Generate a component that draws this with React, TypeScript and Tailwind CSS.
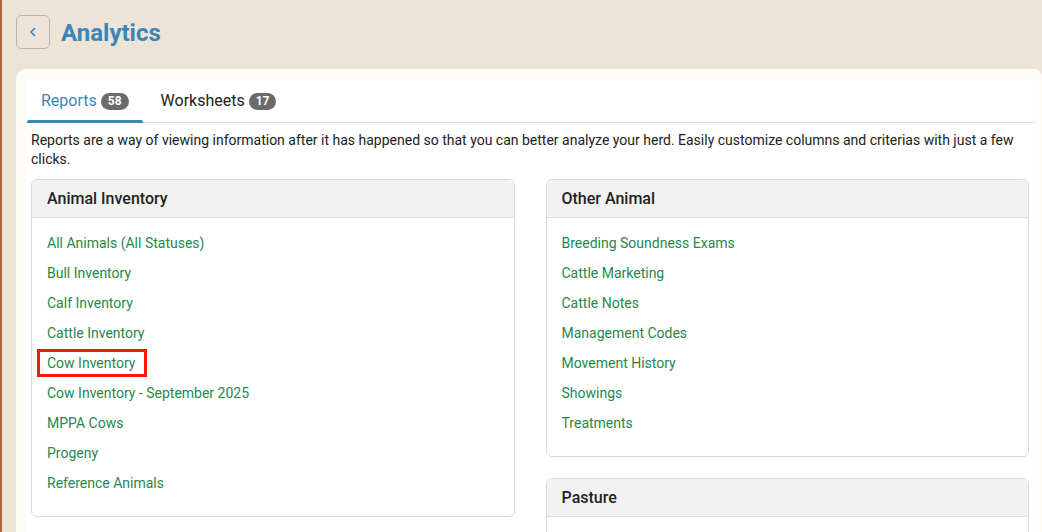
import React from "react";

const font = { fontFamily: "Roboto, 'Liberation Sans', sans-serif" };

function Panel({ title, items, highlight, className = "" }: { title: string; items: string[]; highlight?: string; className?: string }) {
  return (
    <div className={"rounded-[6px] border border-[#d9d9d9] bg-white overflow-visible " + className}>
      <div className="h-[38px] flex items-center px-[15px] bg-[#f2f2f2] border-b border-[#dcdcdc] rounded-t-[6px] text-[16px] font-medium text-[#222]">
        {title}
      </div>
      {items.length > 0 && (
        <ul className="pt-[10px] pb-[18px] px-[15px]">
          {items.map((it) => (
            <li key={it} className="h-[30px] flex items-center text-[14px] text-[#25884d]">
              {it === highlight ? (
                <span className="relative leading-[16px]">
                  {it}
                  <span className="absolute -left-[10px] -right-[12px] -top-[6px] -bottom-[6px] border-[3px] border-[#f31a00]" />
                </span>
              ) : (
                <span>{it}</span>
              )}
            </li>
          ))}
        </ul>
      )}
    </div>
  );
}

export default function App() {
  return (
    <div className="flex h-[532px] overflow-hidden bg-[#ede4d7]" style={font}>
      <div className="w-[2px] shrink-0 bg-[#a4673b]" />
      <div className="flex-1 flex flex-col overflow-hidden">
        <div className="flex items-center pl-[14px] pt-[15px] h-[49px] shrink-0">
          <button className="w-[34px] h-[34px] rounded-[5px] border border-[#b9b6b1] flex items-center justify-center">
            <svg width="12" height="12" viewBox="0 0 12 12" fill="none">
              <path d="M7.5 2.5 L4 6 L7.5 9.5" stroke="#3a86b9" strokeWidth="1.6" strokeLinecap="round" strokeLinejoin="round" />
            </svg>
          </button>
          <h1 className="ml-[11px] mt-[1px] text-[24px] font-bold text-[#3a86b9] leading-none">Analytics</h1>
        </div>
        <div className="mt-[20px] ml-[14px] rounded-tl-[10px] rounded-tr-[8px] bg-[#fffcf7] pl-[10px] pr-[7px] pt-[10px] flex-1">
          <div className="bg-white h-full pl-[1px] pr-0">
            <div className="flex border-b border-[#dcdcdc] h-[44px]">
              <div className="relative flex items-center px-[14px] pt-[1px] text-[16px] text-[#3a86b9]">
                Reports
                <span className="ml-[4px] rounded-full bg-[#6b6b6b] text-white text-[12px] font-bold px-[7px] leading-[17px]">58</span>
                <span className="absolute left-0 right-0 -bottom-[1px] h-[3px] rounded-t-[2px] bg-[#3a86b9]" />
              </div>
              <div className="flex items-center ml-[4px] px-[14px] pt-[1px] text-[16px] text-[#222]">
                Worksheets
                <span className="ml-[4px] rounded-full bg-[#6b6b6b] text-white text-[12px] font-bold px-[7px] leading-[17px]">17</span>
              </div>
            </div>
            <p className="mt-[8px] px-[4px] text-[14px] leading-[19px] text-[#212121]">
              Reports are a way of viewing information after it has happened so that you can better analyze your herd. Easily customize columns and criterias with just a few clicks.
            </p>
            <div className="mt-[10px] px-[4px] grid grid-cols-2 items-start gap-x-[31px] pr-[6px]">
              <Panel
                title="Animal Inventory"
                highlight="Cow Inventory"
                items={[
                  "All Animals (All Statuses)",
                  "Bull Inventory",
                  "Calf Inventory",
                  "Cattle Inventory",
                  "Cow Inventory",
                  "Cow Inventory - September 2025",
                  "MPPA Cows",
                  "Progeny",
                  "Reference Animals",
                ]}
              />
              <div className="flex flex-col gap-[21px]">
                <Panel
                  title="Other Animal"
                  items={[
                    "Breeding Soundness Exams",
                    "Cattle Marketing",
                    "Cattle Notes",
                    "Management Codes",
                    "Movement History",
                    "Showings",
                    "Treatments",
                  ]}
                />
                <Panel title="Pasture" items={[]} className="h-[60px]" />
              </div>
            </div>
          </div>
        </div>
      </div>
    </div>
  );
}
